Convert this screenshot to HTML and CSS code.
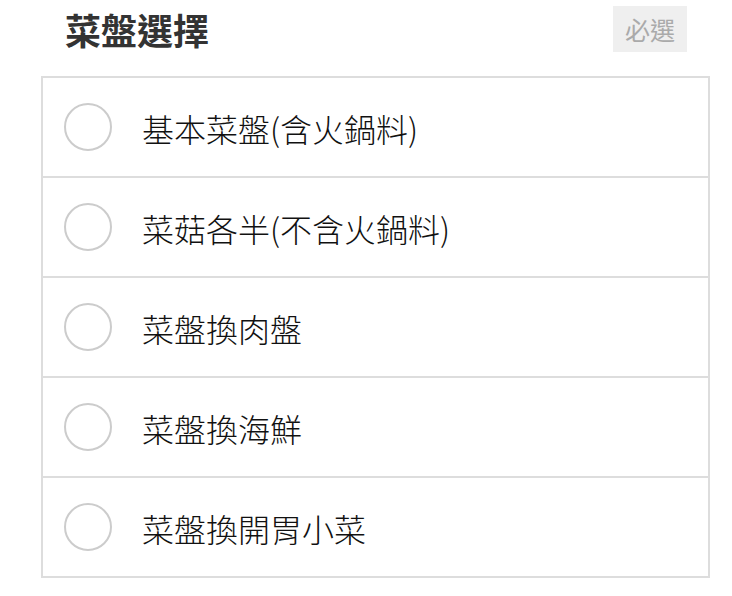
FILE: index.html
```html
<!DOCTYPE html>
<html lang="zh-Hant">

<head>
  <meta charset="UTF-8">
  <title>菜盤選擇</title>
  <link rel="stylesheet" href="styles.css">
</head>

<body>
  <div class="group">
    <!-- Group header -->
    <div class="group-header">
      <h2 class="group-title">菜盤選擇</h2>
      <span class="required-tag">必選</span>
    </div>

    <!-- Options -->
    <div class="option-list">
      <label class="option">
        <input type="radio" name="plate" class="option-radio">
        <span class="option-text">基本菜盤(含火鍋料)</span>
      </label>
      <label class="option">
        <input type="radio" name="plate" class="option-radio">
        <span class="option-text">菜菇各半(不含火鍋料)</span>
      </label>
      <label class="option">
        <input type="radio" name="plate" class="option-radio">
        <span class="option-text">菜盤換肉盤</span>
      </label>
      <label class="option">
        <input type="radio" name="plate" class="option-radio">
        <span class="option-text">菜盤換海鮮</span>
      </label>
      <label class="option">
        <input type="radio" name="plate" class="option-radio">
        <span class="option-text">菜盤換開胃小菜</span>
      </label>
    </div>
  </div>
</body>

</html>
```

FILE: styles.css
```css
body {
  margin: 0;
  padding: 0;
  background-color: #fff;
  font-family: "Noto Sans CJK TC", "Noto Sans", sans-serif;
}

.group {
  width: 100%;
  box-sizing: border-box;
}

.group-header {
  display: flex;
  align-items: center;
  justify-content: space-between;
  height: 46px;
  padding: 0 45px 0 65px;
  margin-top: 6px;
  margin-bottom: 24px;
}

.group-title {
  margin: 0;
  font-size: 36px;
  font-weight: bold;
  line-height: 46px;
  color: #333;
}

.required-tag {
  height: 46px;
  padding: 0 12px;
  background-color: #efefef;
  color: #aaa;
  font-size: 25px;
  line-height: 46px;
}

.option-list {
  margin: 0 22px 0 41px;
  border: 2px solid #ddd;
}

.option {
  display: flex;
  align-items: center;
  height: 98px;
  padding-left: 21px;
  cursor: pointer;
}

.option + .option {
  border-top: 2px solid #ddd;
}

.option-radio {
  appearance: none;
  width: 48px;
  height: 48px;
  margin: 0;
  border: 2px solid #ccc;
  border-radius: 50%;
  background-color: #fff;
  box-sizing: border-box;
  outline: none;
  flex-shrink: 0;
}

.option-radio:checked {
  border: 14px solid #58CC02;
}

.option-text {
  margin-left: 30px;
  padding-top: 2px;
  font-size: 32px;
  font-weight: 300;
  color: #111;
}
```
